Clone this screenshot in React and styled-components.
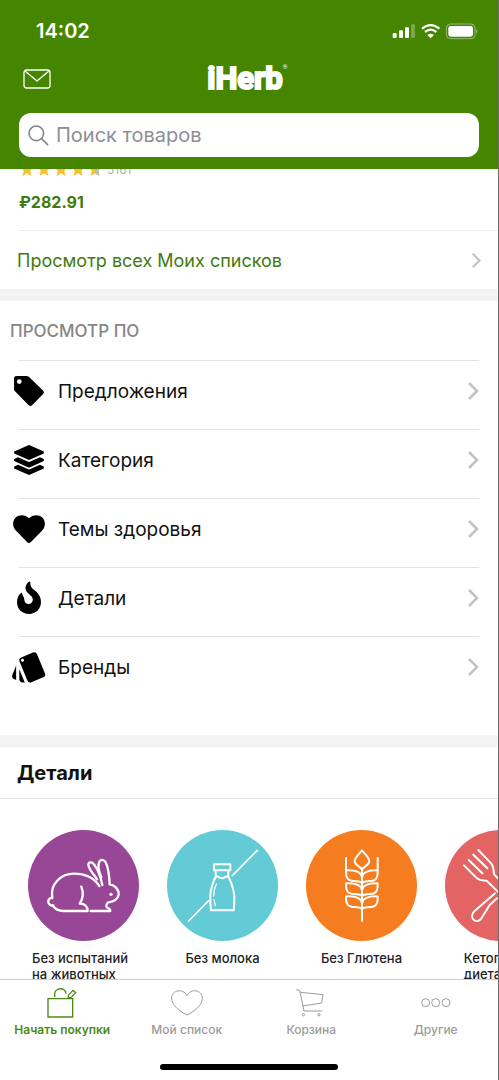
import React from 'react';
import styled, { createGlobalStyle } from 'styled-components';
import { FaLayerGroup } from 'react-icons/fa';
import { MdStyle } from 'react-icons/md';

const green = '#458500';

const GlobalStyle = createGlobalStyle`
  * {
    box-sizing: border-box;
  }
  body {
    margin: 0;
    background: #ffffff;
    font-family: Inter, Roboto, "Liberation Sans", sans-serif;
    color: #111111;
  }
`;

const Screen = styled.div`
  display: flex;
  flex-direction: column;
  height: 100vh;
  overflow: hidden;
  border-right: solid 1px #6c6c6c;
`;

// The green part at the top.

const Header = styled.header`
  flex: none;
  padding: 0 19px 12px;
  background: ${green};
  color: #ffffff;
`;

const StatusBar = styled.div`
  display: flex;
  align-items: center;
  justify-content: space-between;
  height: 61px;
  padding-left: 17px;
`;

const Clock = styled.time`
  font-size: 20px;
  font-weight: 600;
`;

const TitleBar = styled.div`
  display: grid;
  grid-template-columns: 1fr auto 1fr;
  align-items: center;
  height: 36px;
  margin-bottom: 16px;
`;

const MailButton = styled.button`
  display: flex;
  justify-self: start;
  padding: 0 4px;
  border: none;
  background: none;
  color: inherit;
`;

const Logo = styled.h1`
  display: flex;
  margin: 0;
  padding-right: 8px;
  font-family: Roboto, "Liberation Sans", sans-serif;
  font-size: 31px;
  line-height: 36px;
  font-weight: 700;
  -webkit-text-stroke: 2px #ffffff;
  stroke-linejoin: round;
`;

const Registered = styled.sup`
  width: 0;
  font-size: 6px;
  line-height: 12px;
  font-weight: 400;
  -webkit-text-stroke: 0;
`;

const SearchBox = styled.label`
  display: flex;
  align-items: center;
  gap: 7px;
  height: 44px;
  padding: 0 9px;
  border-radius: 12px;
  background: #ffffff;
  color: #85858b;
`;

const SearchInput = styled.input`
  flex: 1;
  min-width: 0;
  padding: 0;
  border: none;
  outline: none;
  background: none;
  font-family: inherit;
  font-size: 20px;
  color: #111111;
  &::placeholder {
    color: #8e8e93;
    opacity: 1;
  }
`;

const StatusIcons = () =>
    <svg width="87" height="18" viewBox="426 62 261 54" fill="#fff" aria-hidden="true">
        <rect x="428" y="95" width="12" height="15" rx="3" />
        <rect x="447" y="87" width="12" height="23" rx="3" />
        <rect x="465" y="78" width="12" height="32" rx="3" />
        <rect x="483" y="69" width="12" height="41" rx="3" opacity=".3" />
        <g fill="none" stroke="#fff" strokeWidth="7">
            <path d="M516 82q26-21 52 0" />
            <path d="M525 92q17-14 34 0" />
        </g>
        <path d="M532 101q10-8 20 0l-10 10z" />
        <rect x="589" y="68" width="86" height="44" rx="12" fill="none"
              stroke="#fff" strokeWidth="3" opacity=".45" />
        <rect x="595" y="74" width="74" height="32" rx="7" />
        <path d="M679 83q6 7 0 14z" opacity=".5" />
    </svg>;

const MailIcon = () =>
    <svg width="28" height="20" viewBox="0 0 28 20" fill="none" stroke="#fff"
         strokeWidth="1.3" strokeLinejoin="round" aria-hidden="true">
        <rect x="1" y="1" width="26" height="18" rx="2.5" />
        <path d="M2 2l12 10L26 2" />
    </svg>;

const SearchIcon = () =>
    <svg width="21" height="21" viewBox="0 0 21 21" fill="none" stroke="currentColor"
         strokeWidth="1.6" strokeLinecap="round" aria-hidden="true">
        <circle cx="8.3" cy="8.3" r="7.3" />
        <path d="M13.6 13.6l6 6" />
    </svg>;

// The scrolling content.

const Content = styled.main`
  flex: 1;
  min-height: 0;
  overflow: hidden;
`;

// Only the lower part of the stars shows under the header.
const Rating = styled.div`
  display: flex;
  align-items: flex-end;
  gap: 3px;
  height: 7px;
  padding-left: 20px;
  overflow: hidden;
`;

const ReviewCount = styled.span`
  padding-left: 2px;
  font-size: 12px;
  line-height: 12px;
  color: #b0b0b0;
`;

const Price = styled.div`
  padding: 16px 19px 18px;
  font-size: 16px;
  line-height: 20px;
  font-weight: 700;
  color: #437a10;
`;

const Divider = styled.hr`
  height: 1px;
  margin: 0 19px;
  border: none;
  background: #e2e2e2;
`;

const ListsDivider = styled(Divider)`
  margin-right: 0;
  background: #ececec;
`;

const Gap = styled.div`
  height: 12px;
  background: #f3f3f3;
`;

const ListsLink = styled.a`
  display: flex;
  align-items: center;
  justify-content: space-between;
  height: 58px;
  padding: 0 17px;
  font-size: 18px;
  color: #437a10;
  text-decoration: none;
`;

const Caption = styled.h2`
  margin: 0;
  padding: 20px 10px 19px;
  font-size: 17px;
  line-height: 20px;
  font-weight: 500;
  color: #858585;
`;

const Menu = styled.ul`
  margin: 0;
  padding: 0 0 30px;
  list-style: none;
`;

const MenuLink = styled.a`
  display: flex;
  align-items: center;
  height: 68px;
  padding: 0 19px 8px 12px;
  font-size: 19px;
  color: #111111;
  text-decoration: none;
`;

const MenuIcon = styled.span`
  display: flex;
  justify-content: center;
  width: 34px;
  margin-right: 12px;
  color: #000000;
  svg {
    flex: none;
  }
`;

const MenuLabel = styled.span`
  flex: 1;
`;

const Chevron = ({height = 18}) =>
    <svg height={height} viewBox="0 0 11 18" fill="none" stroke="#c2c2c5"
         strokeWidth="2.5" aria-hidden="true">
        <path d="M1 1l8 8-8 8" />
    </svg>;

const Star = ({half}) =>
    <svg width="14" height="14" viewBox="0 0 24 24" aria-hidden="true">
        <path fill="#f6c12c" d="M12 0l3.6 8.2L24 9l-6.4 5.800L19.5 24 12 19.2 4.500 24l1.900-9.200L0 9l8.400-.8z" />
        {half && <path fill="#b9b9b9" d="M12 0l3.6 8.2L24 9l-6.4 5.8L19.5 24 12 19.2z" />}
    </svg>;

const TagIcon = () =>
    <svg width="34" height="34" viewBox="0 0 34 34" fill="currentColor">
        <path fillRule="evenodd" d="M4.5 2h10q1.500 0 2.600 1l14.100 13.700q1.500 1.600 0 3.200L20 31.200q-1.700 1.500-3.300 0L3 17.300q-1-1.100-1-2.600V4.500Q2 2 4.500 2zM7.300 5.200a2.400 2.400 0 1 0 0 4.800 2.400 2.400 0 0 0 0-4.800z" />
    </svg>;

const HeartIcon = () =>
    <svg width="34" height="34" viewBox="0 0 34 34" fill="currentColor">
        <path d="M17 31q-1 0-2-1L3.800 18.500C.2 14.700.3 8.800 3.700 5.500 7.500 2 13.300 2.500 17 6.300c3.700-3.800 9.500-4.300 13.300-.8 3.400 3.300 3.500 9.200-.1 13L19 30q-1 1-2 1z" />
    </svg>;

const FlameIcon = () =>
    <svg width="34" height="34" viewBox="0 0 34 34" fill="currentColor">
        <path d="M18.300 1.300C18 6 20.500 7.700 23.500 10 27 13 29 16.500 29 21c0 7-5.300 12-12 12S5 28 5 21.500C5 17 6.500 14 9 12q1-.6 1.200.5C10.200 14.500 12 15 12.200 18c.2 3.200 1.800 5 4.300 5s4.300-1.800 4.300-4.200c0-3.300-2.500-4.300-5-6.800-3.300-3.300-2.800-7.800.7-11q1.500-1 1.800.3z" />
    </svg>;

const menuItems = [
    {label: 'Предложения', icon: <TagIcon />},
    {label: 'Категория', icon: <FaLayerGroup size={30} />},
    {label: 'Темы здоровья', icon: <HeartIcon />},
    {label: 'Детали', icon: <FlameIcon />},
    {label: 'Бренды', icon: <MdStyle size={38} />},
];

// Round pictures with a label below.

const SectionTitle = styled.h2`
  margin: 0;
  padding: 14px 17px 13px;
  border-bottom: solid 1px #e4e4e4;
  font-size: 20px;
  line-height: 24px;
  font-weight: 700;
`;

const Details = styled.div`
  display: flex;
  gap: 28px;
  padding: 31px 28px 0;
`;

const Detail = styled.a`
  display: flex;
  flex: none;
  flex-direction: column;
  align-items: center;
  gap: 9px;
  width: 111px;
  font-size: 13px;
  line-height: 16px;
  font-weight: 500;
  color: #222222;
  text-decoration: none;
`;

const DetailLabel = styled.span`
  max-width: 103px;
`;

const Disc = styled.span`
  display: flex;
  border-radius: 50%;
  background: ${props => props.$color};
`;

const DiscDrawing = ({viewBox, children}) =>
    <svg width="111" height="111" viewBox={viewBox} fill="none" stroke="#fff"
         strokeWidth="6" strokeLinecap="round" strokeLinejoin="round" aria-hidden="true">
        {children}
    </svg>;

const Rabbit = () =>
    <DiscDrawing viewBox="84 44 333 333">
        <path strokeWidth="7" d="M157 248C149 205 184 175 222 175c34 0 58 10 76 37M291 192c-8-15-24-26-26-44 1-9 11-8 16-2 16 18 21 40 26 63M304 186c-8-18-12-37-5-49 5-6 14-3 18 4 9 18 11 43 12 66 16 2 28 16 27 31-2 14-14 21-33 24-7 9-5 15 3 17q5 2 5 8h-59M244 214c7 16 6 37-5 51 15-1 24 9 24 22h-72q-22 0-33-17M155 248c-7 0-11 5-10 12 1 8 8 12 15 10" />
        <circle cx="333" cy="237" r="5" fill="#fff" stroke="none" />
    </DiscDrawing>;

const Bottle = () =>
    <DiscDrawing viewBox="502 44 333 333">
        <path strokeWidth="5" d="M567 317l60-61M698 181l75-76" />
        <path d="M643 147h49v18h-49zM648 166v18c-12 23-18 47-16 74l2 27h68l2-27c2-29-6-51-18-75v-17M649 185c7-6 10 4 18 4s11-9 19-5" />
        <path strokeWidth="4" d="M650 206c-6 13-8 23-8 36M643 253l4 18" />
    </DiscDrawing>;

const Wheat = () =>
    <DiscDrawing viewBox="171 44 333 333">
        <path d="M339 163v154M339 105c-12 14-22 22-22 33s15 14 22 24c7-10 22-13 22-24s-10-19-22-33zM291 128v37M386 128v37" />
        {[0, 39, 78].map(y =>
            <path key={y} transform={`translate(0 ${y})`}
                  d="M339 203c-4-6-10-5-22-6-20 0-27-9-26-32 27-1 45 4 48 20 3-16 21-21 47-20 1 23-5 32-25 32-12 1-18 0-22 6" />)}
    </DiscDrawing>;

const ForkAndKnife = () =>
    <DiscDrawing viewBox="590 44 333 333">
        <path d="M647 150l39 39c11 10 20 5 30 8l109 107c14 15 34-4 20-18L738 178c-4-9 1-21-9-33l-39-41M661 134l41 40M675 118l42 41M740 234l-61 53c-20 15 2 43 19 24l26-42 22-20M766 208l76-77c14-14 20-28 18-43-35 20-70 52-105 86" />
    </DiscDrawing>;

// The bar at the bottom.

const TabBar = styled.footer`
  flex: none;
  padding-bottom: 10px;
  border-top: solid 1px #cfcfcf;
  background: #ffffff;
`;

const Tabs = styled.nav`
  display: grid;
  grid-template-columns: repeat(4, 1fr);
  padding-top: 5px;
`;

const Tab = styled.button`
  display: flex;
  flex-direction: column;
  align-items: center;
  gap: 3px;
  padding: 0;
  border: none;
  background: none;
  font-family: inherit;
  font-size: 12px;
  line-height: 16px;
  font-weight: ${props => props.$active ? 600 : 500};
  color: ${props => props.$active ? '#4b8a16' : '#9b9b9b'};
  white-space: nowrap;
`;

const HomeIndicator = styled.div`
  width: 178px;
  height: 6px;
  margin: 26px auto 0;
  border-radius: 3px;
  background: #000000;
`;

const TabIcon = ({viewBox, children}) =>
    <svg width="34" height="34" viewBox={viewBox} fill="none" stroke="currentColor"
         strokeWidth="3" aria-hidden="true">
        {children}
    </svg>;

const tabs = [
    {
        label: 'Начать покупки',
        active: true,
        icon: <TabIcon viewBox="136 30 102 102">
                  <path strokeWidth="4" d="M145 71h74v55h-74zM165 66v-8c0-22 34-22 34-2M206 61l14-15 8 7-14 15-8-1z" />
              </TabIcon>
    },
    {
        label: 'Мой список',
        icon: <TabIcon viewBox="510 30 102 102">
                  <path d="M561 120c-24-12-46-30-46-50 0-26 35-31 46-8 11-23 46-18 46 8 0 20-22 38-46 50z" />
              </TabIcon>
    },
    {
        label: 'Корзина',
        icon: <TabIcon viewBox="135 30 102 102">
                  <path d="M142 44l10 2 13 62h55M154 52l68 7-4 25-58 9" />
                  <circle cx="163" cy="119" r="3.5" />
                  <circle cx="210" cy="119" r="3.5" />
              </TabIcon>
    },
    {
        label: 'Другие',
        icon: <TabIcon viewBox="507 30 102 102">
                  <circle cx="527" cy="83" r="12" />
                  <circle cx="557" cy="83" r="12" />
                  <circle cx="588" cy="83" r="12" />
              </TabIcon>
    },
];

const App = () => {
    return <Screen>
               <GlobalStyle />
               <Header>
                   <StatusBar>
                       <Clock>14:02</Clock>
                       <StatusIcons />
                   </StatusBar>
                   <TitleBar>
                       <MailButton aria-label="Почта">
                           <MailIcon />
                       </MailButton>
                       <Logo>iHerb<Registered>®</Registered></Logo>
                   </TitleBar>
                   <SearchBox>
                       <SearchIcon />
                       <SearchInput type="search" placeholder="Поиск товаров"
                                    aria-label="Поиск товаров" />
                   </SearchBox>
               </Header>
               <Content>
                   <Rating>
                       <Star />
                       <Star />
                       <Star />
                       <Star />
                       <Star half />
                       <ReviewCount>5161</ReviewCount>
                   </Rating>
                   <Price>₽282.91</Price>
                   <ListsDivider />
                   <ListsLink href="#lists">
                       Просмотр всех Моих списков
                       <Chevron height={15} />
                   </ListsLink>
                   <Gap />
                   <Caption>ПРОСМОТР ПО</Caption>
                   <Menu>
                       {menuItems.map(({label, icon}) =>
                           <li key={label}>
                               <Divider />
                               <MenuLink href="#menu">
                                   <MenuIcon>{icon}</MenuIcon>
                                   <MenuLabel>{label}</MenuLabel>
                                   <Chevron />
                               </MenuLink>
                           </li>)}
                   </Menu>
                   <Gap />
                   <SectionTitle>Детали</SectionTitle>
                   <Details>
                       <Detail href="#cruelty-free">
                           <Disc $color="#984797"><Rabbit /></Disc>
                           <DetailLabel>Без испытаний на животных</DetailLabel>
                       </Detail>
                       <Detail href="#dairy-free">
                           <Disc $color="#62cbd6"><Bottle /></Disc>
                           <DetailLabel>Без молока</DetailLabel>
                       </Detail>
                       <Detail href="#gluten-free">
                           <Disc $color="#f57d20"><Wheat /></Disc>
                           <DetailLabel>Без Глютена</DetailLabel>
                       </Detail>
                       <Detail href="#keto">
                           <Disc $color="#e46464"><ForkAndKnife /></Disc>
                           <DetailLabel>Кетогенная<br />диета</DetailLabel>
                       </Detail>
                   </Details>
               </Content>
               <TabBar>
                   <Tabs>
                       {tabs.map(({label, icon, active}) =>
                           <Tab key={label} $active={active}>
                               {icon}
                               {label}
                           </Tab>)}
                   </Tabs>
                   <HomeIndicator />
               </TabBar>
           </Screen>;
};

export default App;
